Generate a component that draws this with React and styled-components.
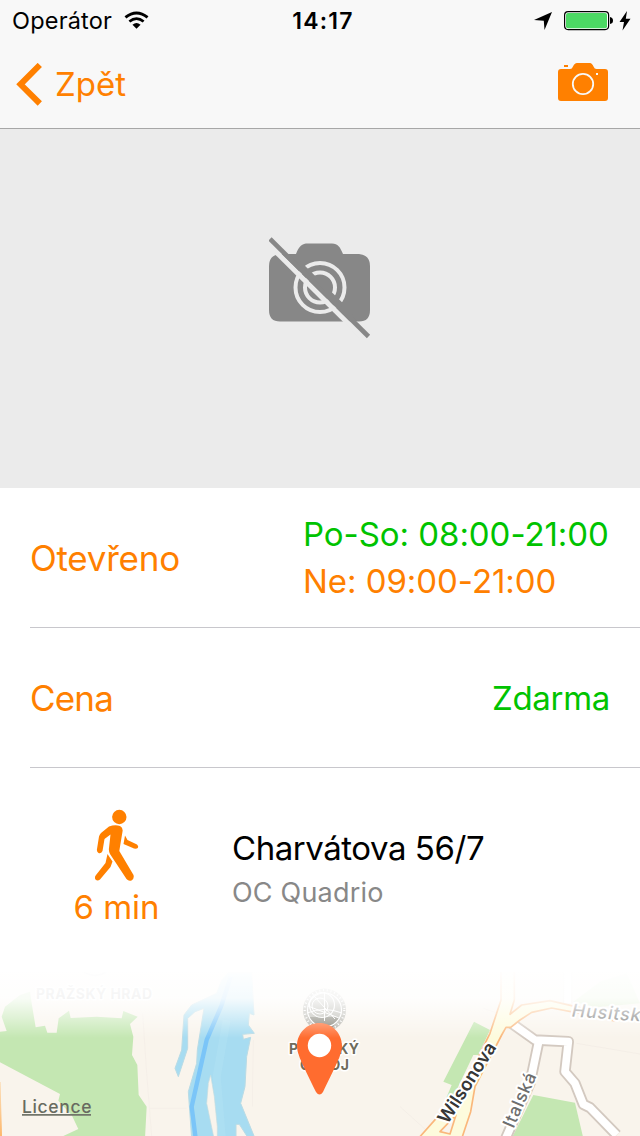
import React from 'react';
import styled, { createGlobalStyle } from 'styled-components';

const ORANGE = '#ff8000';
const GREEN = '#00c300';

const GlobalStyle = createGlobalStyle`
  body { margin: 0; background: #fff; }
  * { box-sizing: border-box; }
`;

const Screen = styled.main`
  width: 640px;
  height: 1136px;
  overflow: hidden;
  display: flex;
  flex-direction: column;
  background: #fff;
  color: #000;
  font-family: Inter, 'Liberation Sans', sans-serif;
  svg { display: block; flex: none; }
`;

const Header = styled.header`
  height: 129px;
  flex: none;
  background: #f8f8f8;
  border-bottom: 1px solid #a7a7a7;
`;

const StatusBar = styled.div`
  height: 40px;
  display: grid;
  grid-template-columns: 1fr auto 1fr;
  align-items: center;
  padding: 2px 9px 0 12px;
`;

const StatusGroup = styled.div`
  display: flex;
  align-items: center;
  gap: ${(p) => p.$gap}px;
  justify-content: ${(p) => (p.$end ? 'flex-end' : 'flex-start')};
`;

const Text = styled.span`
  display: block;
  white-space: nowrap;
  padding-top: ${(p) => p.$drop || 0}px;
  font-size: ${(p) => p.$size}px;
  line-height: ${(p) => p.$line || p.$size * 1.2}px;
  letter-spacing: ${(p) => p.$track || 0}px;
  font-weight: ${(p) => p.$weight || 400};
  color: ${(p) => p.$color || '#000'};
`;

const Clock = styled(Text)`
  padding-left: 3px;
`;

const NavBar = styled.nav`
  height: 88px;
  display: flex;
  align-items: center;
  justify-content: space-between;
  padding: 0 32px 0 16px;
`;

const IconButton = styled.button`
  display: flex;
  align-items: center;
  gap: 12px;
  padding: 0 0 ${(p) => p.$lift || 0}px;
  border: 0;
  background: none;
  font: inherit;
`;

const Hero = styled.section`
  height: 359px;
  flex: none;
  background: #ebebeb;
  display: flex;
  justify-content: center;
  padding-top: 108px;
`;

const InfoRow = styled.section`
  height: 140px;
  flex: none;
  margin-left: 30px;
  padding-right: 30px;
  border-bottom: 1px solid #c8c7cc;
  display: flex;
  align-items: center;
  justify-content: space-between;
`;

const Hours = styled.div`
  width: 307px;
`;

const AddressRow = styled.section`
  height: 204px;
  flex: none;
  display: flex;
`;

const Walk = styled.div`
  width: 232px;
  padding: 41px 0 0 1px;
  display: flex;
  flex-direction: column;
  align-items: center;
  gap: 7px;
`;

const Address = styled.div`
  padding-top: 58px;
`;

const MapDrawing = styled.svg`
  width: 640px;
  height: 164px;
  text { font-family: Inter, 'Liberation Sans', sans-serif; }
`;

const WifiIcon = () => (
  <svg width="25" height="19" viewBox="0 0 26 19" fill="none" stroke="#000" strokeWidth="3">
    <path d="M1.500 6.200Q13-3 24.500 6.200" />
    <path d="M5.600 10.500Q13 4.500 20.400 10.500" strokeWidth="2.800" />
    <path d="M13 18L8.800 13.800Q13 10.500 17.200 13.800Z" fill="#000" stroke="none" />
  </svg>
);

const LocationIcon = () => (
  <svg width="18" height="19" viewBox="0 0 18 19">
    <path d="M18 0L10.500 18L9.800 8.800L0 7.900Z" />
  </svg>
);

const BatteryIcon = () => (
  <svg width="49" height="20" viewBox="0 0 49 20">
    <rect x=".6" y=".6" width="44" height="18" rx="3.500" fill="#fff" stroke="#000" strokeWidth="1.200" />
    <rect x="2" y="2" width="41" height="15.200" rx="2" fill="#4cd964" />
    <path d="M46 6Q49 6.500 49 9.600T46 13Z" />
  </svg>
);

const BoltIcon = () => (
  <svg width="12" height="20" viewBox="0 0 12 20">
    <path d="M8 0L.5 11H5L3.500 19.500L11.500 7.800H6.800Z" />
  </svg>
);

const BackIcon = () => (
  <svg width="27" height="43" viewBox="0 0 27 43">
    <path d="M23.800 2L4.500 21.300L23.800 40.500" fill="none" stroke={ORANGE} strokeWidth="6" />
  </svg>
);

const CameraIcon = () => (
  <svg width="50" height="38" viewBox="0 0 50 38" fill={ORANGE}>
    <path d="M3 6H12Q14 6 15 3.500Q16.500 0 19 0H32Q34 0 35.500 3.500Q36.500 6 38.500 6H47Q50 6 50 9V35Q50 38 47 38H3Q0 38 0 35V9Q0 6 3 6Z" />
    <rect x="6" y="2" width="4" height="2" />
    <circle cx="25" cy="21" r="10.200" fill="none" stroke="#f8f8f8" strokeWidth="1.800" />
    <rect x="38" y="10" width="2" height="2" fill="#f8f8f8" />
  </svg>
);

const NoPhotoIcon = () => (
  <svg width="102" height="102" viewBox="0 0 102 102">
    <path fill="#878787" d="M11 17H27C30 9 33 6.500 39 6.500H63C69 6.500 71 10 74 17H90Q101 18 101 29V73Q101 84.500 90 84.500H11Q0 84.500 0 73V29Q0 18 11 17Z" />
    <g fill="none" stroke="#ebebeb" strokeWidth="4">
      <circle cx="51" cy="50.500" r="24.500" />
      <circle cx="51" cy="50.500" r="15" />
    </g>
    <path d="M-3 5L97 104" stroke="#ebebeb" strokeWidth="5" />
    <path d="M24 22L82 79" stroke="#878787" strokeWidth="7" />
    <path d="M1 2L99.500 99.500" stroke="#878787" strokeWidth="4.600" />
  </svg>
);

const WalkIcon = () => (
  <svg width="44" height="72" viewBox="0 0 44 72" fill={ORANGE}>
    <circle cx="24.300" cy="8" r="7.200" />
    <path d="M14 17.500Q20 15.500 25 17Q28 18.500 27.600 22L24.300 42L38.500 66Q39.500 70 36.500 71.500Q33.500 72.500 31.500 70L15 45Q13.500 42 14 39L15.500 25.500L9.500 30L7.500 42Q6 45 3.500 44Q1.500 43 2 40L4 27.500Q4.500 25.500 6 24Z" />
    <path d="M12.500 45L17.500 52.500L15.500 58L5 70.500Q2.500 72.500.5 70.500Q-1 68.500 1 66L10.500 54Z" />
    <path d="M30 26.500L32.500 31L42 35.500Q44 37 42.800 39Q41.500 40 39 39.500L28.500 35Z" />
  </svg>
);

const CityMap = () => (
  <MapDrawing viewBox="0 972 640 164">
    <defs>
      <linearGradient id="fade" x1="0" y1="972" x2="0" y2="1038" gradientUnits="userSpaceOnUse">
        <stop offset="0" stopColor="#fff" stopOpacity=".98" />
        <stop offset=".4" stopColor="#fff" stopOpacity=".88" />
        <stop offset=".7" stopColor="#fff" stopOpacity=".46" />
        <stop offset="1" stopColor="#fff" stopOpacity="0" />
      </linearGradient>
      <linearGradient id="edge" x1="0" y1="1080" x2="0" y2="1136" gradientUnits="userSpaceOnUse">
        <stop offset="0" stopColor="#fbe0bd" />
        <stop offset="1" stopColor="#fdb86e" />
      </linearGradient>
    </defs>
    <rect y="972" width="640" height="164" fill="#f9f4ec" />
    <g transform="translate(0 940) scale(.33333)">
      <path fill="#c4e7b2" d="M0 275L20 273L5 230L15 200L60 165L90 155L95 190L107 262L135 257L142 278H170L176 235L207 212L212 234L290 230L365 235L370 213L413 230L390 252L400 290L396 345L412 375L416 465L440 500L435 595H175L235 567L215 525L175 482L180 462L0 367Z" />
      <path fill="#a7dcf1" stroke="#b9dbe5" strokeWidth="3" d="M685 98H755L762 225L748 220L745 255L763 280L728 283L730 298L752 292L740 350L735 440L722 490L765 595H745L718 553H708V595H575L565 455L590 370L592 330L612 205L585 215L563 235V325L535 410L525 385L545 330L552 225L575 195L650 160L665 120Z" />
      <path d="M680 240L650 410L665 588" fill="none" stroke="#b4e3f4" strokeWidth="24" opacity=".45" />
      <path fill="#f9f4ec" stroke="#c4dce0" strokeWidth="2" d="M632 405L643 470L652 560V595H642L620 490L625 430Z" />
      <path fill="none" stroke="#7bc5f8" strokeWidth="13" d="M692 110L665 195L620 300L575 500L587 595" />
      <path fill="none" stroke="#f5efe8" strokeWidth="3" d="M428 220L440 400L455 588M450 505H560M760 300L757 500" />
    </g>
    <path d="M0 1082L1.500 1136H0Z" fill="url(#edge)" stroke="url(#edge)" strokeWidth="1" />
    <g transform="translate(400 940) scale(.33333)" fill="none" strokeLinejoin="round">
      <path fill="#c4e7b2" d="M222 245L270 270L235 345H220L160 470L130 495L155 435L130 425Z" />
      <path fill="#c4e7b2" d="M400 465L525 488L550 595H335Z" />
      <path fill="#c4e7b2" opacity=".6" d="M520 185L600 125L680 100L720 190L590 202Z" />
      <path stroke="#f4eee7" strokeWidth="3" d="M0 500L100 590M530 310L720 342M250 205L310 225" />
      <path stroke="#eee9e3" strokeWidth="28" d="M503 90V190" />
      <path stroke="#fff" strokeWidth="21" d="M503 90V190" />
      <g stroke="#d3c9c0" strokeWidth="34">
        <path d="M335 250L405 300L505 305L495 395L525 430L550 493L570 503L650 585" />
        <path d="M417 300L390 430L315 600" />
      </g>
      <g stroke="#fff" strokeWidth="23">
        <path d="M335 250L405 300L505 305L495 395L525 430L550 493L570 503L650 585" />
        <path d="M417 300L390 430L315 600" />
      </g>
      <path fill="#fdfbdc" stroke="#fab77b" strokeWidth="5" d="M303 90V180L270 280L210 400L140 500L60 590V605H182L212 515L225 440L305 285L318 262H332L360 240L395 217L455 204L540 220L640 242L730 235V212L640 220L540 203L450 182L365 195L330 223L343 180V90Z" />
      <path fill="#f9f4ec" stroke="#fab77b" strokeWidth="5" d="M168 525L150 582L120 575Z" />
    </g>
    <g fontWeight="700" fontSize="14" fill="#68685d" stroke="#fff" strokeWidth="3" paintOrder="stroke" strokeLinejoin="round">
      <text x="36" y="999" textLength="116" fill="#aaa">PRAŽSKÝ HRAD</text>
      <g fill="#6f6c5c">
        <text x="289" y="1053.500" textLength="70">PRAŽSKÝ</text>
        <text x="300" y="1069.500" textLength="49">ORLOJ</text>
      </g>
    </g>
    <path d="M84 972Q95 979 106 972" fill="none" stroke="#bbb" strokeWidth="1.500" />
    <g stroke="#fff" strokeWidth="4" paintOrder="stroke" strokeLinejoin="round">
      <text transform="translate(447.500 1125) rotate(-57.500)" textLength="92" fontSize="18.500" fontWeight="600" fill="#373737">Wilsonova</text>
      <text transform="translate(513.500 1129) rotate(-66.500)" textLength="58" fontSize="17.500" fontWeight="500" fill="#6e6e6e">Italská</text>
      <text transform="translate(571.500 1016.500) rotate(4)" textLength="81" fontSize="18" fontWeight="500" fontStyle="italic" fill="#6e6e6e">Husitská</text>
    </g>
    <g fill="none" stroke="#fff">
      <circle cx="324.500" cy="1010" r="21.500" fill="#b3b2aa" stroke="none" />
      <path d="M308 1017H341L333 1027H315Z" fill="#807f74" stroke="none" />
      <circle cx="324.500" cy="1010" r="19.800" strokeWidth="2.200" strokeDasharray="1 2.800" />
      <circle cx="324.500" cy="1010" r="17" strokeWidth="1.200" />
      <circle cx="322" cy="1005" r="12.500" strokeWidth="1.100" />
      <circle cx="320" cy="1006" r="8" strokeWidth="1" />
      <path d="M307 1013Q324 1006 342 1013M308 1006L339 1018M314 996L335 1019M324.500 992V1021" strokeWidth="1" />
    </g>
    <path fill="#ff6c2f" d="M319.500 1023C332 1023 342 1033 342 1046C342 1055 335 1067 323 1092Q319.500 1097 316 1092C304 1067 297 1055 297 1046C297 1033 307 1023 319.500 1023Z" />
    <circle cx="319.500" cy="1045.500" r="11.700" fill="#fff" />
    <rect y="972" width="640" height="66" fill="url(#fade)" />
    <text x="22" y="1113" textLength="69.500" fontSize="17.500" fontWeight="500" fill="#686b60">Licence</text>
    <path d="M22 1114.800H91" stroke="#72756a" strokeWidth="1.700" />
  </MapDrawing>
);

export default function App() {
  return (
    <Screen>
      <GlobalStyle />
      <Header>
        <StatusBar>
          <StatusGroup $gap={12}>
            <Text $size={23.5} $track={0.2}>Operátor</Text>
            <WifiIcon />
          </StatusGroup>
          <Clock $size={23} $weight={600} $track={1.2} $drop={1}>14:17</Clock>
          <StatusGroup $gap={12} $end>
            <LocationIcon />
            <StatusGroup $gap={6}>
              <BatteryIcon />
              <BoltIcon />
            </StatusGroup>
          </StatusGroup>
        </StatusBar>
        <NavBar>
          <IconButton>
            <BackIcon />
            <Text $size={33} $drop={2} $color={ORANGE}>Zpět</Text>
          </IconButton>
          <IconButton $lift={4} aria-label="Camera">
            <CameraIcon />
          </IconButton>
        </NavBar>
      </Header>
      <Hero>
        <NoPhotoIcon />
      </Hero>
      <InfoRow>
        <Text $size={35} $track={-0.25} $drop={1} $color={ORANGE}>Otevřeno</Text>
        <Hours>
          <Text $size={33} $line={47} $track={-0.05} $color={GREEN}>Po-So: 08:00-21:00</Text>
          <Text $size={33} $line={47} $track={-0.05} $color={ORANGE}>Ne: 09:00-21:00</Text>
        </Hours>
      </InfoRow>
      <InfoRow>
        <Text $size={35} $track={-0.8} $drop={1} $color={ORANGE}>Cena</Text>
        <Text $size={33} $track={-0.3} $drop={2} $color={GREEN}>Zdarma</Text>
      </InfoRow>
      <AddressRow>
        <Walk>
          <WalkIcon />
          <Text $size={33} $color={ORANGE}>6 min</Text>
        </Walk>
        <Address>
          <Text $size={33} $line={45} $track={-0.45}>Charvátova 56/7</Text>
          <Text $size={27} $line={42} $track={0.2} $drop={1} $color="#888">OC Quadrio</Text>
        </Address>
      </AddressRow>
      <CityMap />
    </Screen>
  );
}
